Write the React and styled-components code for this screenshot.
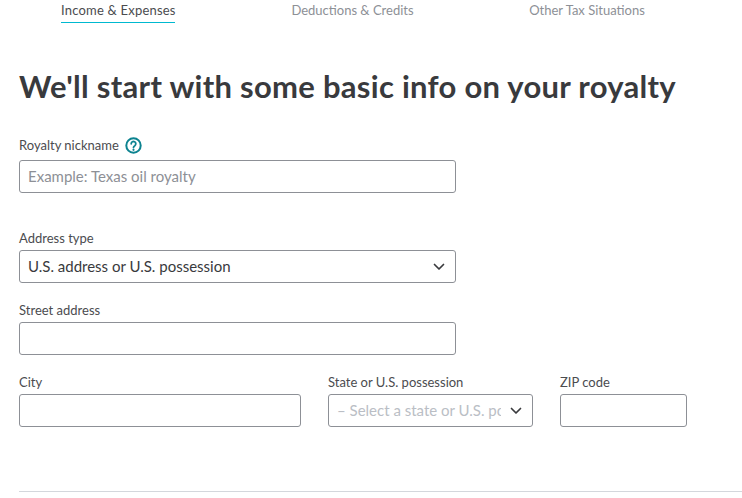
import React from 'react';
import styled, { createGlobalStyle } from 'styled-components';

const Global = createGlobalStyle`
  html, body { margin: 0; padding: 0; background: #fff; overflow: hidden; }
  body { font-family: Lato, "Open Sans", sans-serif; color: #393a3d; }
`;

const Page = styled.div`
  width: 742px;
  height: 498px;
  overflow: hidden;
  padding-left: 19px;
  box-sizing: border-box;
`;

const Tabs = styled.nav`
  display: flex;
  height: 23px;
  padding-left: 42px;
`;

const Tab = styled.div`
  font-size: 13px;
  line-height: 20px;
  height: 23px;
  box-sizing: border-box;
  width: ${p => p.$width}px;
  margin-right: ${p => p.$gap}px;
  text-align: center;
  white-space: nowrap;
  letter-spacing: ${p => (p.$active ? '0.2px' : '0')};
  color: ${p => (p.$active ? '#4b4c4f' : '#8d9096')};
  border-bottom: ${p => (p.$active ? '1px solid #00b9d0' : 'none')};
`;

const Heading = styled.h1`
  margin: 45px 0 33px;
  font-size: 31px;
  line-height: 36px;
  font-weight: 700;
  letter-spacing: 0.28px;
  color: #393a3d;
  white-space: nowrap;
`;

const Row = styled.div`
  display: flex;
  margin-bottom: ${p => p.$mb || 0}px;
`;

const Field = styled.div`
  width: ${p => p.$width}px;
  margin-right: ${p => p.$gap || 0}px;
`;

const Label = styled.label`
  display: flex;
  align-items: center;
  height: 16px;
  margin-bottom: ${p => p.$mb || 6}px;
  font-size: 13px;
  line-height: 16px;
  color: #4b4c4f;
`;

const Input = styled.input`
  display: block;
  width: 100%;
  height: 33px;
  box-sizing: border-box;
  padding: 0 8px 2px;
  border: 1px solid #8d9096;
  border-radius: 3px;
  background: #fff;
  outline: none;
  font-family: inherit;
  font-size: 15px;
  color: #393a3d;
  &::placeholder { color: #8d9096; opacity: 1; }
`;

const SelectBox = styled.div`
  display: flex;
  align-items: center;
  height: 33px;
  box-sizing: border-box;
  padding: 0 10px 0 8px;
  border: 1px solid #8d9096;
  border-radius: 3px;
  font-size: 15px;
  color: ${p => (p.$placeholder ? '#babec5' : '#393a3d')};
`;

const SelectText = styled.span`
  flex: 1;
  min-width: 0;
  overflow: hidden;
  white-space: nowrap;
  padding-bottom: 2px;
  margin-right: ${p => p.$mr || 0}px;
`;

const HelpIcon = styled.svg`
  width: 17px;
  height: 17px;
  margin-left: 6px;
`;

const Chevron = styled.svg`
  width: 12px;
  height: 8px;
  flex: none;
`;

const Divider = styled.hr`
  margin: 0;
  border: 0;
  height: 1px;
  background: #d4d7dc;
`;

const Arrow = () => (
  <Chevron viewBox="0 0 12 8">
    <path d="M1.5 1.5 6 6l4.5-4.5" fill="none" stroke="#393a3d" strokeWidth="1.7" strokeLinecap="round" strokeLinejoin="round" />
  </Chevron>
);

export default function App() {
  return (
    <Page>
      <Global />
      <Tabs>
        <Tab $active $width={114} $gap={116}>Income &amp; Expenses</Tab>
        <Tab $width={123} $gap={115}>Deductions &amp; Credits</Tab>
        <Tab $width={116}>Other Tax Situations</Tab>
      </Tabs>
      <Heading>We'll start with some basic info on your royalty</Heading>
      <Row $mb={37}>
        <Field $width={437}>
          <Label $mb={7}>
            Royalty nickname
            <HelpIcon viewBox="0 0 17 17">
              <circle cx="8.5" cy="8.5" r="7.2" fill="none" stroke="#0d8390" strokeWidth="2" />
              <path d="M6.2 6.8a2.3 2.3 0 1 1 3.6 1.9c-.8.5-1.3.9-1.3 1.8" fill="none" stroke="#0d8390" strokeWidth="1.8" strokeLinecap="round" />
              <circle cx="8.5" cy="12.8" r="1.1" fill="#0d8390" />
            </HelpIcon>
          </Label>
          <Input placeholder="Example: Texas oil royalty" readOnly />
        </Field>
      </Row>
      <Row $mb={19}>
        <Field $width={437}>
          <Label $mb={4}>Address type</Label>
          <SelectBox>
            <SelectText>U.S. address or U.S. possession</SelectText>
            <Arrow />
          </SelectBox>
        </Field>
      </Row>
      <Row $mb={19}>
        <Field $width={437}>
          <Label $mb={4}>Street address</Label>
          <Input readOnly />
        </Field>
      </Row>
      <Row $mb={64}>
        <Field $width={282} $gap={27}>
          <Label $mb={4}>City</Label>
          <Input readOnly />
        </Field>
        <Field $width={205} $gap={27}>
          <Label $mb={4}>State or U.S. possession</Label>
          <SelectBox $placeholder>
            <SelectText $mr={9}>– Select a state or U.S. possession</SelectText>
            <Arrow />
          </SelectBox>
        </Field>
        <Field $width={127}>
          <Label $mb={4}>ZIP code</Label>
          <Input readOnly />
        </Field>
      </Row>
      <Divider />
    </Page>
  );
}
